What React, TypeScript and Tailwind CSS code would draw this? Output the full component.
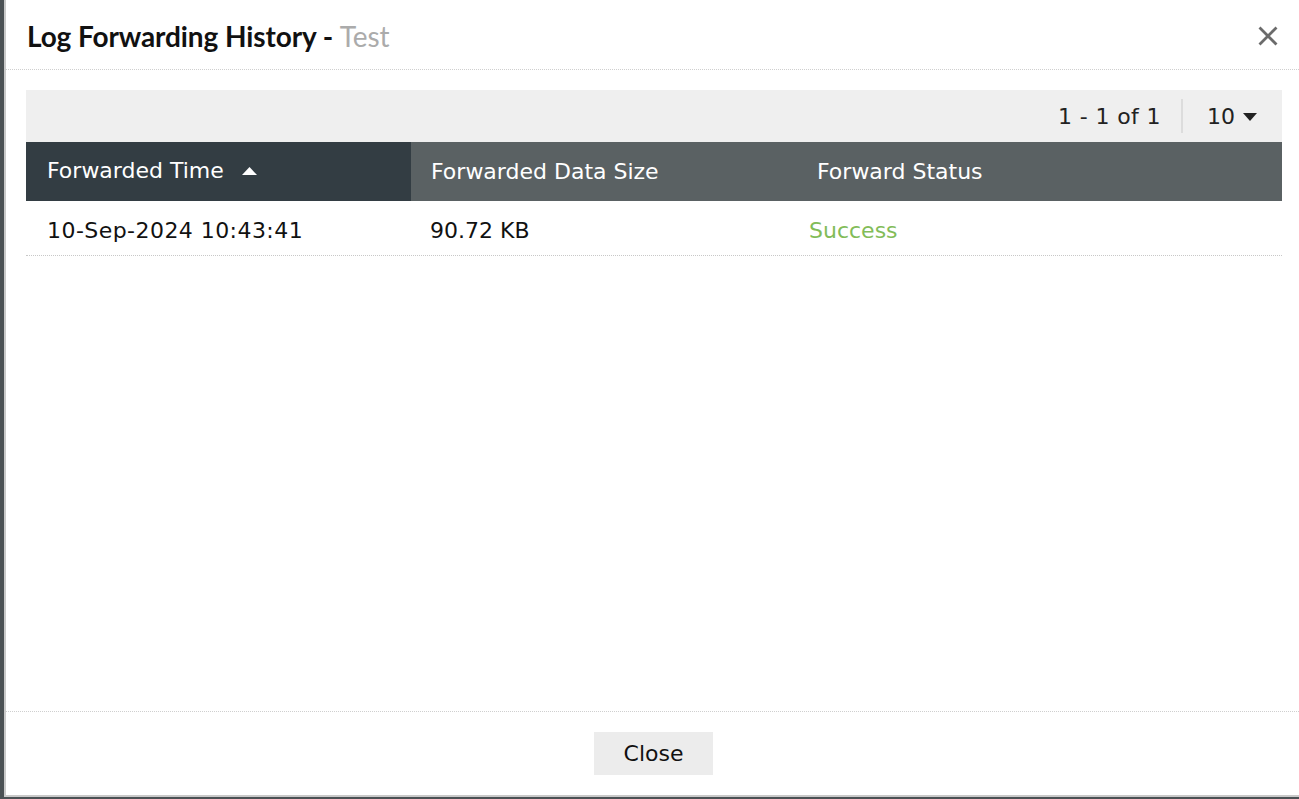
import React from 'react';

const verdana = { fontFamily: '"DejaVu Sans", Verdana, sans-serif' };

function SortUp() {
  return (
    <svg width="15" height="9" viewBox="0 0 15 9" className="ml-[18px]">
      <path d="M0 9 L7.5 1 L15 9 Z" fill="#fff" />
    </svg>
  );
}

function Caret() {
  return (
    <svg width="14" height="8" viewBox="0 0 14 8" className="ml-[8px] mt-[2px]">
      <path d="M0 0 L14 0 L7 8 Z" fill="#222" />
    </svg>
  );
}

export default function App() {
  return (
    <div className="h-[799px] w-[1299px] bg-[#4b5154] overflow-hidden">
      <div className="ml-[4px] h-[797px] border-l-2 border-b-2 border-[#c9c9c9] bg-white flex flex-col">
        {/* Header */}
        <div className="h-[70px] shrink-0 border-t-[3px] border-b border-dotted border-t-white border-b-[#cfcfcf] flex items-center pl-[21px] pr-[21px]">
          <h2
            className="text-[28px] font-bold text-[#111] tracking-[-0.1px]"
            style={{ fontFamily: 'Lato, "Open Sans", sans-serif' }}
          >
            Log Forwarding History - <span className="font-normal text-[#ababab]">Test</span>
          </h2>
          <button className="ml-auto" aria-label="close">
            <svg width="20" height="20" viewBox="0 0 20 20">
              <path d="M1.5 1.5 L18.5 18.5 M18.5 1.5 L1.5 18.5" stroke="#6b6b6b" strokeWidth="2.8" />
            </svg>
          </button>
        </div>

        {/* Body */}
        <div className="flex-1 pl-[20px] pr-[17px] pt-[20px]" style={verdana}>
          <div className="h-[52px] bg-[#efefef] flex items-center justify-end pr-[25px] text-[22px] text-[#222]">
            <span className="tracking-[0.4px]">1 - 1 of 1</span>
            <span className="ml-[20px] mr-[24px] h-[34px] w-[2px] bg-[#dcdcdc]" />
            <span>10</span>
            <Caret />
          </div>
          <div className="grid grid-cols-[385px_406px_1fr] h-[59px] text-white text-[22px]">
            <div className="bg-[#333d43] flex items-center pl-[21px] pb-[3px]">
              Forwarded Time
              <SortUp />
            </div>
            <div className="bg-[#5a6163] flex items-center pl-[20px]">Forwarded Data Size</div>
            <div className="bg-[#5a6163] flex items-center">Forward Status</div>
          </div>
          <div className="grid grid-cols-[385px_398px_1fr] h-[55px] pt-[4px] items-center text-[22px] text-[#111] border-b border-dotted border-[#c8c8c8]">
            <div className="pl-[21px] tracking-[0.45px]">10-Sep-2024 10:43:41</div>
            <div className="pl-[19px]">90.72 KB</div>
            <div className="text-[#82bc58]">Success</div>
          </div>
        </div>

        {/* Footer */}
        <div className="h-[84px] shrink-0 border-t border-dotted border-[#cfcfcf] flex items-center justify-center">
          <button
            className="w-[119px] h-[43px] bg-[#ececec] text-[22px] text-[#111] ml-[2px]"
            style={verdana}
          >
            Close
          </button>
        </div>
      </div>
    </div>
  );
}
